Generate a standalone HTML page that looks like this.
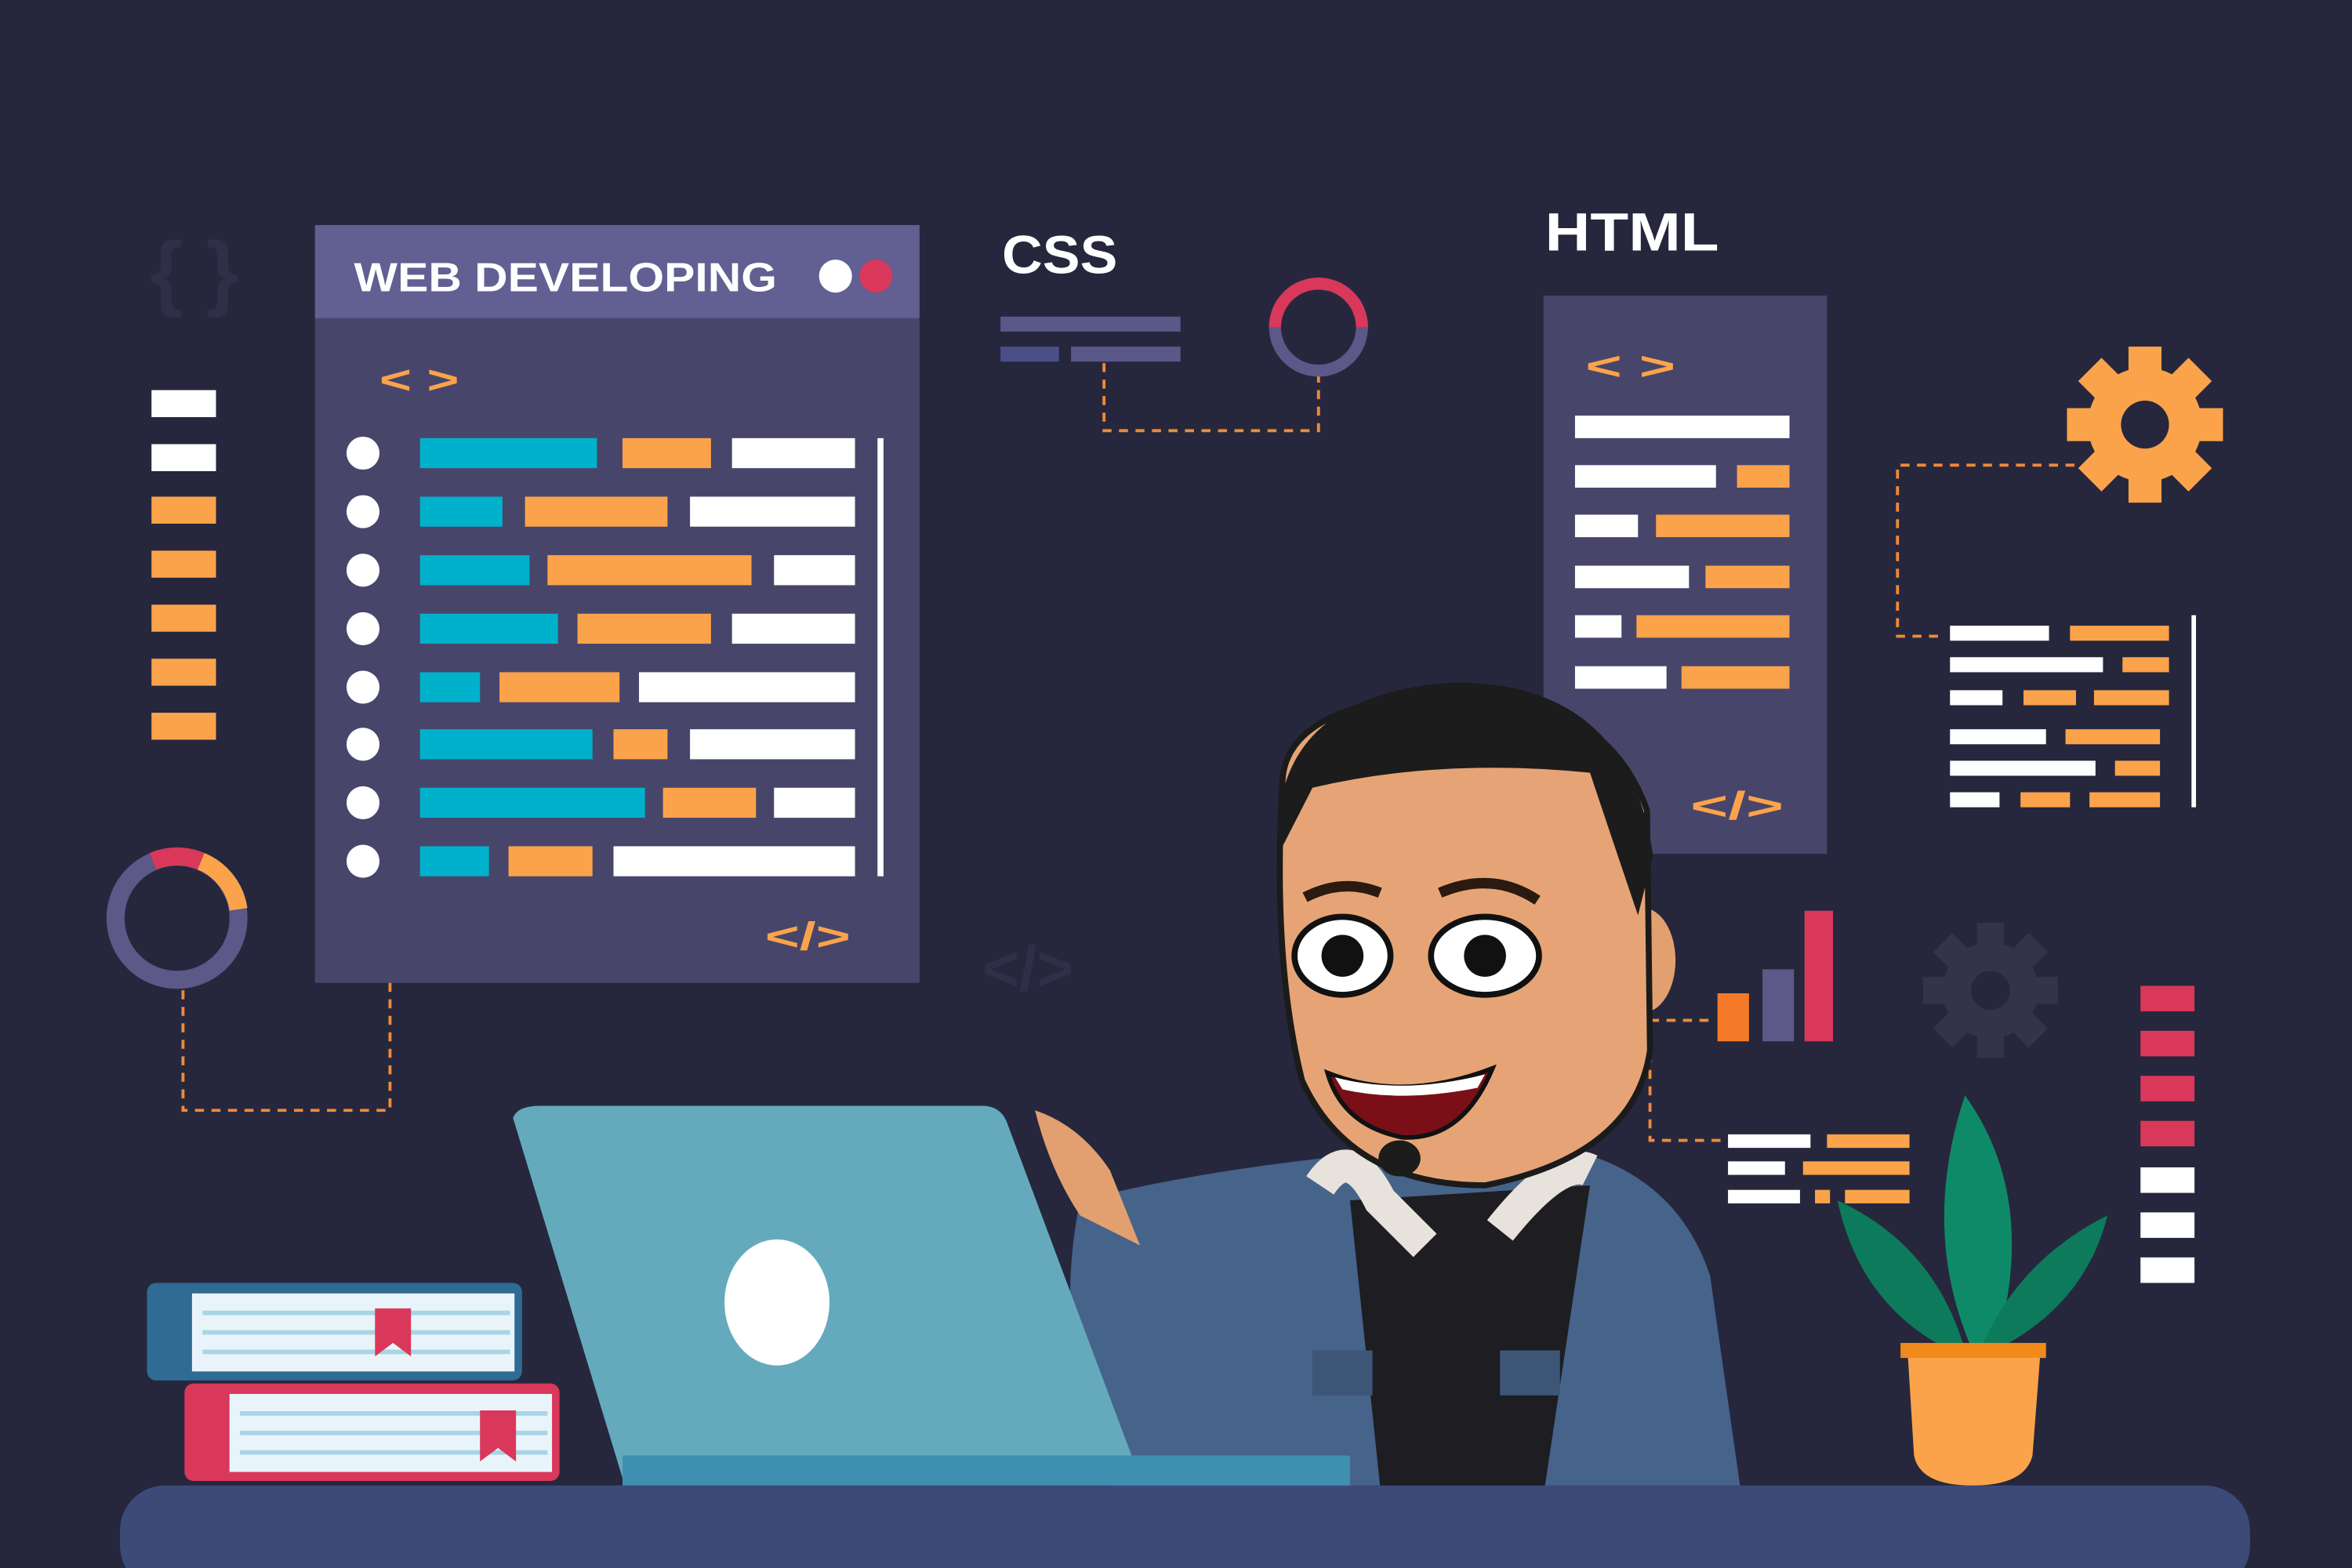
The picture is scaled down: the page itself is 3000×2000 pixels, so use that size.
<!DOCTYPE html>
<html><head><meta charset="utf-8"><style>
html,body{margin:0;padding:0;background:#26273d;}
svg{display:block}
text{font-family:"Liberation Sans",sans-serif;font-weight:bold}
</style></head><body>
<svg width="3000" height="2000" viewBox="0 0 1568 1045" preserveAspectRatio="none" xmlns="http://www.w3.org/2000/svg">
<rect width="1568" height="1045" fill="#26273d"/>
<text x="100" y="200" font-size="56" fill="#2f2f48">{ }</text>
<text x="655" y="660" font-size="42" fill="#2f2f48">&lt;/&gt;</text>
<g transform="translate(1327,660)" fill="#33334a"><circle r="32"/><g><rect x="-9" y="-45" width="18" height="90"/><rect x="-9" y="-45" width="18" height="90" transform="rotate(45)"/><rect x="-9" y="-45" width="18" height="90" transform="rotate(90)"/><rect x="-9" y="-45" width="18" height="90" transform="rotate(135)"/></g><circle r="13" fill="#26273d"/></g>

<g fill="#fff"><rect x="101" y="260" width="43" height="18"/><rect x="101" y="296" width="43" height="18"/></g>
<g fill="#fba34b"><rect x="101" y="331" width="43" height="18"/><rect x="101" y="367" width="43" height="18"/><rect x="101" y="403" width="43" height="18"/><rect x="101" y="439" width="43" height="18"/><rect x="101" y="475" width="43" height="18"/></g>
<circle cx="118" cy="612" r="41" fill="none" stroke="#5c5888" stroke-width="12"/>
<path d="M102 574 A41 41 0 0 1 134 574" fill="none" stroke="#d9385a" stroke-width="12"/>
<path d="M134 574 A41 41 0 0 1 159 606" fill="none" stroke="#fba34b" stroke-width="12"/>
<path d="M122 660 V740 H260 V655" fill="none" stroke="#f08a3a" stroke-width="2" stroke-dasharray="6 5"/>

<rect x="210" y="150" width="403" height="505" fill="#48456b"/>
<rect x="210" y="150" width="403" height="62" fill="#625f92"/>
<text x="236" y="194" font-size="27" fill="#fff" textLength="282" lengthAdjust="spacingAndGlyphs">WEB DEVELOPING</text>
<circle cx="557" cy="184" r="11" fill="#fff"/><circle cx="584" cy="184" r="11" fill="#d9385a"/>
<text x="253" y="262" font-size="26" fill="#fba34b" textLength="53" lengthAdjust="spacingAndGlyphs">&lt; &gt;</text>
<g fill="#fff">
<circle cx="242" cy="302" r="11"/><circle cx="242" cy="341" r="11"/><circle cx="242" cy="380" r="11"/><circle cx="242" cy="419" r="11"/><circle cx="242" cy="458" r="11"/><circle cx="242" cy="496" r="11"/><circle cx="242" cy="535" r="11"/><circle cx="242" cy="574" r="11"/>
</g>
<g>
<rect x="280" y="292" width="118" height="20" fill="#00b1cc"/><rect x="415" y="292" width="59" height="20" fill="#fba34b"/><rect x="488" y="292" width="82" height="20" fill="#fff"/>
<rect x="280" y="331" width="55" height="20" fill="#00b1cc"/><rect x="350" y="331" width="95" height="20" fill="#fba34b"/><rect x="460" y="331" width="110" height="20" fill="#fff"/>
<rect x="280" y="370" width="73" height="20" fill="#00b1cc"/><rect x="365" y="370" width="136" height="20" fill="#fba34b"/><rect x="516" y="370" width="54" height="20" fill="#fff"/>
<rect x="280" y="409" width="92" height="20" fill="#00b1cc"/><rect x="385" y="409" width="89" height="20" fill="#fba34b"/><rect x="488" y="409" width="82" height="20" fill="#fff"/>
<rect x="280" y="448" width="40" height="20" fill="#00b1cc"/><rect x="333" y="448" width="80" height="20" fill="#fba34b"/><rect x="426" y="448" width="144" height="20" fill="#fff"/>
<rect x="280" y="486" width="115" height="20" fill="#00b1cc"/><rect x="409" y="486" width="36" height="20" fill="#fba34b"/><rect x="460" y="486" width="110" height="20" fill="#fff"/>
<rect x="280" y="525" width="150" height="20" fill="#00b1cc"/><rect x="442" y="525" width="62" height="20" fill="#fba34b"/><rect x="516" y="525" width="54" height="20" fill="#fff"/>
<rect x="280" y="564" width="46" height="20" fill="#00b1cc"/><rect x="339" y="564" width="56" height="20" fill="#fba34b"/><rect x="409" y="564" width="161" height="20" fill="#fff"/>
</g>
<rect x="585" y="292" width="4" height="292" fill="#fff"/>
<text x="510" y="633" font-size="26" fill="#fba34b" textLength="57" lengthAdjust="spacingAndGlyphs">&lt;/&gt;</text>

<text x="668" y="182" font-size="36" fill="#fff" textLength="77" lengthAdjust="spacingAndGlyphs">CSS</text>
<rect x="667" y="211" width="120" height="10" fill="#5a5789"/>
<rect x="667" y="231" width="39" height="10" fill="#4a4f88"/><rect x="714" y="231" width="73" height="10" fill="#5a5789"/>
<path d="M736 242 V287 H879 V250" fill="none" stroke="#f08a3a" stroke-width="2" stroke-dasharray="6 5"/>
<circle cx="879" cy="218" r="29" fill="none" stroke="#5c5888" stroke-width="8"/>
<path d="M850 218 A29 29 0 0 1 908 218" fill="none" stroke="#d9385a" stroke-width="8"/>

<text x="1030" y="167" font-size="36" fill="#fff" textLength="116" lengthAdjust="spacingAndGlyphs">HTML</text>
<rect x="1029" y="197" width="189" height="372" fill="#48456b"/>
<text x="1057" y="253" font-size="26" fill="#fba34b" textLength="60" lengthAdjust="spacingAndGlyphs">&lt; &gt;</text>
<g fill="#fff"><rect x="1050" y="277" width="143" height="15"/><rect x="1050" y="310" width="94" height="15"/><rect x="1050" y="343" width="42" height="15"/><rect x="1050" y="377" width="76" height="15"/><rect x="1050" y="410" width="31" height="15"/><rect x="1050" y="444" width="61" height="15"/></g>
<g fill="#fba34b"><rect x="1158" y="310" width="35" height="15"/><rect x="1104" y="343" width="89" height="15"/><rect x="1137" y="377" width="56" height="15"/><rect x="1091" y="410" width="102" height="15"/><rect x="1121" y="444" width="72" height="15"/></g>
<text x="1127" y="546" font-size="26" fill="#fba34b" textLength="62" lengthAdjust="spacingAndGlyphs">&lt;/&gt;</text>

<g transform="translate(1430,283)" fill="#fba34b"><circle r="38"/><g><rect x="-11" y="-52" width="22" height="104"/><rect x="-11" y="-52" width="22" height="104" transform="rotate(45)"/><rect x="-11" y="-52" width="22" height="104" transform="rotate(90)"/><rect x="-11" y="-52" width="22" height="104" transform="rotate(135)"/></g><circle r="16" fill="#26273d"/></g>
<path d="M1383 310 H1265 V424 H1292" fill="none" stroke="#f08a3a" stroke-width="2" stroke-dasharray="6 5"/>
<g fill="#fff"><rect x="1300" y="417" width="66" height="10"/><rect x="1300" y="438" width="102" height="10"/><rect x="1300" y="460" width="35" height="10"/><rect x="1300" y="486" width="64" height="10"/><rect x="1300" y="507" width="97" height="10"/><rect x="1300" y="528" width="33" height="10"/></g>
<g fill="#fba34b"><rect x="1380" y="417" width="66" height="10"/><rect x="1415" y="438" width="31" height="10"/><rect x="1349" y="460" width="35" height="10"/><rect x="1396" y="460" width="50" height="10"/><rect x="1377" y="486" width="63" height="10"/><rect x="1410" y="507" width="30" height="10"/><rect x="1347" y="528" width="33" height="10"/><rect x="1393" y="528" width="47" height="10"/></g>
<rect x="1461" y="410" width="3" height="128" fill="#fff"/>

<rect x="1145" y="662" width="21" height="32" fill="#f47a2a"/>
<rect x="1175" y="646" width="21" height="48" fill="#5c5888"/>
<rect x="1203" y="607" width="19" height="87" fill="#d9385a"/>
<path d="M1100 680 H1140 M1100 680 V760 H1148" fill="none" stroke="#f08a3a" stroke-width="2" stroke-dasharray="6 5"/>
<g fill="#fff"><rect x="1152" y="756" width="55" height="9"/><rect x="1152" y="774" width="38" height="9"/><rect x="1152" y="793" width="48" height="9"/></g>
<g fill="#fba34b"><rect x="1218" y="756" width="55" height="9"/><rect x="1202" y="774" width="71" height="9"/><rect x="1210" y="793" width="10" height="9"/><rect x="1230" y="793" width="43" height="9"/></g>

<g fill="#d9385a"><rect x="1427" y="657" width="36" height="17"/><rect x="1427" y="687" width="36" height="17"/><rect x="1427" y="717" width="36" height="17"/><rect x="1427" y="747" width="36" height="17"/></g>
<g fill="#fff"><rect x="1427" y="778" width="36" height="17"/><rect x="1427" y="808" width="36" height="17"/><rect x="1427" y="838" width="36" height="17"/></g>

<rect x="80" y="990" width="1420" height="70" rx="30" fill="#3c4a78"/>

<!-- person -->
<path d="M720 800 Q800 780 900 770 L1060 770 Q1120 790 1140 850 L1160 990 L740 990 Q700 900 720 800Z" fill="#46638a"/>
<path d="M900 800 L1060 790 L1030 990 L920 990Z" fill="#1d1d22"/>
<path d="M880 790 Q900 760 920 800 L950 830 M1060 780 Q1040 770 1000 820" fill="none" stroke="#e8e2dc" stroke-width="22"/>
<rect x="1000" y="900" width="40" height="30" fill="#3d5577"/>
<rect x="875" y="900" width="40" height="30" fill="#3d5577"/>
<path d="M690 740 Q700 780 720 810 L760 830 L740 780 Q720 750 690 740Z" fill="#e2a070"/>
<ellipse cx="1095" cy="640" rx="22" ry="35" fill="#e2a070"/>
<path d="M855 520 Q858 470 960 462 Q1070 460 1098 540 L1100 700 Q1090 770 990 790 Q900 790 868 720 Q848 640 855 520Z" fill="#e6a476" stroke="#1b1b1b" stroke-width="4"/>
<path d="M852 570 Q845 465 965 455 Q1085 452 1102 570 L1092 610 Q1075 560 1060 515 Q960 505 875 525 Z" fill="#1c1c1c"/>
<ellipse cx="895" cy="637" rx="32" ry="26" fill="#fff" stroke="#111" stroke-width="4"/>
<ellipse cx="990" cy="637" rx="36" ry="26" fill="#fff" stroke="#111" stroke-width="4"/>
<circle cx="895" cy="637" r="14" fill="#111"/><circle cx="990" cy="637" r="14" fill="#111"/>
<path d="M870 598 Q895 585 920 595 M960 595 Q995 580 1025 600" stroke="#2a1a10" stroke-width="7" fill="none"/>
<path d="M885 715 Q935 735 995 712 Q975 760 935 758 Q895 750 885 715Z" fill="#7a0f18" stroke="#111" stroke-width="3"/>
<path d="M890 718 Q935 730 990 716 L985 725 Q935 735 895 726Z" fill="#fff"/>
<ellipse cx="933" cy="772" rx="14" ry="12" fill="#1c1c1c"/>

<path d="M342 745 Q345 737 360 737 L655 737 Q668 737 672 750 L760 985 L415 985 Z" fill="#64aabc"/>
<rect x="415" y="970" width="485" height="20" fill="#3f8fb0"/>
<ellipse cx="518" cy="868" rx="35" ry="42" fill="#fff"/>

<rect x="98" y="855" width="250" height="65" rx="6" fill="#2f6b93"/>
<rect x="128" y="862" width="215" height="52" fill="#e9f4fa"/>
<g stroke="#a8d4e6" stroke-width="3"><line x1="135" y1="875" x2="340" y2="875"/><line x1="135" y1="888" x2="340" y2="888"/><line x1="135" y1="901" x2="340" y2="901"/></g>
<path d="M250 872 h24 v32 l-12 -9 l-12 9Z" fill="#d9385a"/>
<rect x="123" y="922" width="250" height="65" rx="6" fill="#d9385a"/>
<rect x="153" y="929" width="215" height="52" fill="#e9f4fa"/>
<g stroke="#a8d4e6" stroke-width="3"><line x1="160" y1="942" x2="365" y2="942"/><line x1="160" y1="955" x2="365" y2="955"/><line x1="160" y1="968" x2="365" y2="968"/></g>
<path d="M320 940 h24 v34 l-12 -9 l-12 9Z" fill="#d9385a"/>

<path d="M1315 900 Q1280 820 1310 730 Q1360 800 1330 900Z" fill="#0f8a68"/>
<path d="M1300 900 Q1240 870 1225 800 Q1290 830 1310 900Z" fill="#0d7a5c"/>
<path d="M1330 900 Q1390 870 1405 810 Q1345 840 1320 900Z" fill="#0d7a5c"/>
<rect x="1267" y="895" width="97" height="10" fill="#f08a1a"/>
<path d="M1272 905 H1360 L1355 970 Q1350 990 1315 990 Q1280 990 1276 970Z" fill="#fba34b"/>
</svg>
</body></html>
